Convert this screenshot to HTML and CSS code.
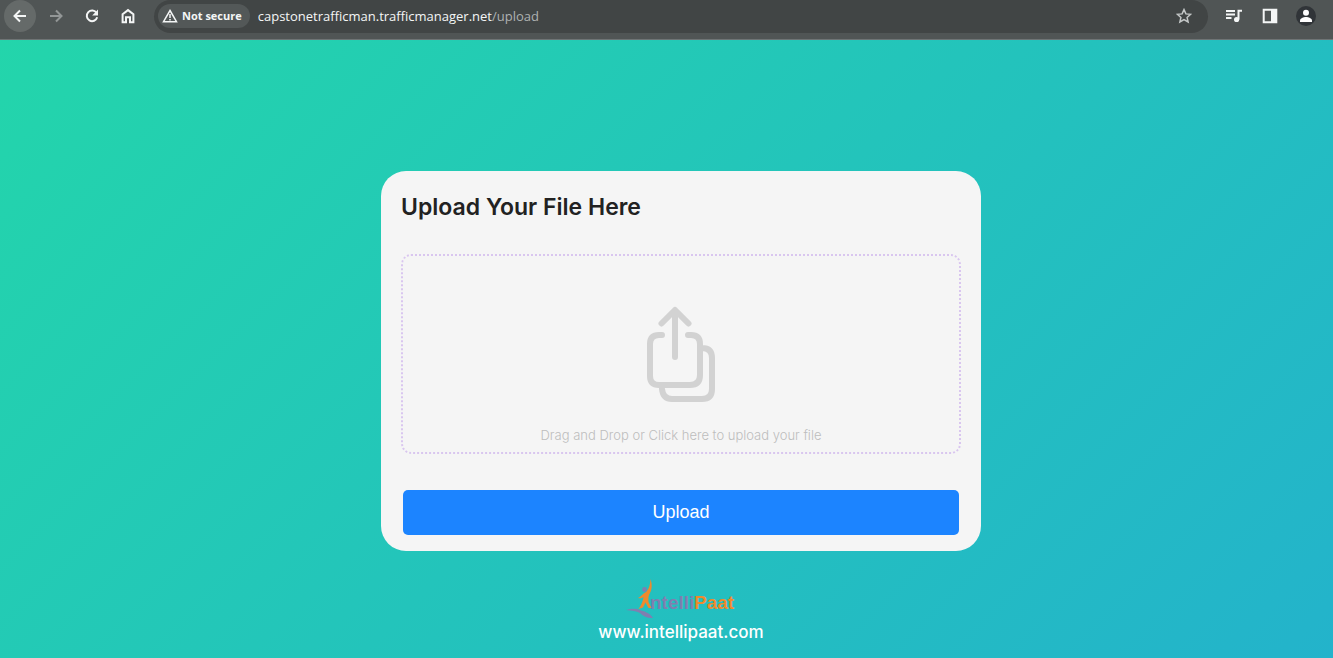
FILE: index.html
```html
<!DOCTYPE html>
<html lang="en">
<head>
<meta charset="utf-8">
<meta name="viewport" content="width=device-width, initial-scale=1">
<title>Upload</title>
<link rel="stylesheet" href="styles.css">
</head>
<body>
<header class="toolbar">
  <nav class="nav-buttons" aria-label="Browser navigation">
    <button class="icon-button icon-button-active" type="button" aria-label="Back">
      <svg class="icon" viewBox="0 0 16 16"><path d="M14 8H3M8 2.5 2.5 8 8 13.5"/></svg>
    </button>
    <button class="icon-button icon-button-dim" type="button" aria-label="Forward">
      <svg class="icon" viewBox="0 0 16 16"><path d="M2 8h11M8 2.5 13.5 8 8 13.5"/></svg>
    </button>
    <button class="icon-button" type="button" aria-label="Reload">
      <svg class="icon" viewBox="0 0 16 16"><path d="M12.6 5A5.3 5.3 0 1 0 13.2 9.3"/><path class="solid" d="M14 1.6v5.8H8.2z"/></svg>
    </button>
    <button class="icon-button" type="button" aria-label="Home">
      <svg class="icon" viewBox="0 0 16 16"><path d="M2.6 6.3 8 2.1l5.4 4.2v8H10V9.2H6v5.1H2.6z"/></svg>
    </button>
  </nav>
  <div class="address-bar">
    <button class="security-chip" type="button">
      <svg class="icon warning-icon" viewBox="0 0 16 16"><path d="M8 2.5 14.5 13.7h-13zM8 6v4M8 11v1.500"/></svg>
      <span>Not secure</span>
    </button>
    <p class="address">capstonetrafficman.trafficmanager.net<span class="address-path">/upload</span></p>
    <button class="icon-button star-button" type="button" aria-label="Bookmark">
      <svg class="icon" viewBox="0 0 16 16"><path d="m8 1.600 1.900 4.300 4.700.4-3.500 3.100 1 4.600L8 11.600 3.900 14l1-4.600-3.500-3.100 4.700-.4z"/></svg>
    </button>
  </div>
  <div class="tools">
    <button class="icon-button" type="button" aria-label="Media controls">
      <svg class="icon" viewBox="0 0 16 16"><path d="M0 3h9M0 6.500h9M0 10h5.500M12.500 11.500V2.700H16"/><circle class="solid" cx="10.600" cy="11.500" r="2.600"/></svg>
    </button>
    <button class="icon-button" type="button" aria-label="Side panel">
      <svg class="icon" viewBox="0 0 16 16"><path d="M1.700 1.700h12.600v12.600H1.700z"/><path class="solid" d="M9 1h6v14H9z"/></svg>
    </button>
    <button class="icon-button" type="button" aria-label="Profile">
      <svg class="avatar" viewBox="0 0 20 20"><circle class="avatar-back" cx="10" cy="10" r="10"/><circle class="avatar-person" cx="10" cy="6.800" r="3"/><path class="avatar-person" d="M4 16v-1.500c0-2.200 3.500-3.500 6-3.500s6 1.300 6 3.500V16z"/></svg>
    </button>
  </div>
</header>
<main class="page">
  <form class="card">
    <h1 class="card-title">Upload Your File Here</h1>
    <label class="drop-area" for="file">
      <input class="file-input" id="file" type="file">
      <svg class="upload-icon" viewBox="0 0 72 96" aria-hidden="true"><path d="M30 51V5M16.500 17.500 30 4l13.500 13.500M17 29h-3Q5 29 5 38v32q0 9 9 9h31q10 0 10-10V38q0-9-9-9h-3M57 42q10 0 10 10v31q0 10-10 10H27q-9 0-10-10"/></svg>
      <span class="drop-text">Drag and Drop or Click here to upload your file</span>
    </label>
    <button class="upload-button" type="submit">Upload</button>
  </form>
  <footer class="brand">
    <svg class="logo" viewBox="0 0 112 42" role="img" aria-label="IntelliPaat">
      <path class="logo-orange" d="M25.500 1C27.500 7 27 12 24 17c-1 3-.5 5-.5 7l3 6h-3l-3-5.500-2.500 5-4.500 1.500c3-4 4.500-8 5-12-2 1.500-3.500 1.500-5.500 1 3-1.500 5-4.500 8-6 3-3 4-7 4.500-13z"/>
      <circle class="logo-purple" cx="19.500" cy="11.500" r="2.400"/>
      <path class="logo-purple" d="M1 32c5-1.500 11-2 15 .5 5 1 10 4 12 7.500-5 .5-9-1-13-5-4-2-8-2.500-14-3z"/>
      <text class="logo-text logo-purple" x="25" y="31">ntelli</text>
      <text class="logo-text logo-orange" x="69" y="31">Paat</text>
    </svg>
    <a class="brand-link" href="#">www.intellipaat.com</a>
  </footer>
</main>
</body>
</html>
```
FILE: styles.css
```css
* { box-sizing: border-box; }
body {
  margin: 0;
  min-height: 100vh;
  display: flex;
  flex-direction: column;
  font-family: Inter, "Liberation Sans", sans-serif;
}
button { border: 0; padding: 0; font: inherit; color: inherit; background: none; cursor: pointer; }
.toolbar {
  display: flex;
  align-items: flex-start;
  height: 40px;
  padding: 0 11px 0 4px;
  background: #505555;
  border-bottom: 1px solid #6f7475;
  color: #f4f6f6;
}
.nav-buttons { display: flex; gap: 4px; margin-right: 10px; }
.icon-button { display: grid; place-items: center; width: 32px; height: 32px; border-radius: 16px; }
.icon-button-active { background: #656a69; }
.icon-button-dim { color: #929696; }
.icon { width: 16px; height: 16px; fill: none; stroke: currentColor; stroke-width: 2; }
.icon .solid { fill: currentColor; stroke: none; }
.address-bar {
  flex: 1;
  display: flex;
  align-items: center;
  height: 33px;
  padding: 0 8px 1px 4px;
  border-radius: 17px;
  background: #414545;
}
.security-chip {
  display: flex;
  align-items: center;
  gap: 4px;
  height: 24px;
  padding: 0 8px 0 4px;
  border-radius: 12px;
  background: #535858;
  font: 700 11px/24px "Open Sans", sans-serif;
}
.warning-icon { stroke-width: 1.5; }
.address { flex: 1; margin: 0 0 0 8px; font: 13px/32px "Open Sans", sans-serif; }
.address-path { color: #aeb2b2; }
.star-button { color: #c4c8c8; }
.star-button .icon { stroke-width: 1.5; }
.tools { display: flex; gap: 4px; margin-left: 10px; }
.avatar { width: 20px; height: 20px; }
.avatar-back { fill: #303438; }
.avatar-person { fill: #fff; }
.page {
  flex: 1;
  display: flex;
  flex-direction: column;
  align-items: center;
  padding: 131px 0 14px 29px;
  background: linear-gradient(135deg, #23d5ab, #23b3cb);
}
.card {
  display: flex;
  flex-direction: column;
  width: 100%;
  max-width: 600px;
  padding: 20px 20px 16px;
  border-radius: 25px;
  background: #f5f5f5;
}
.card-title { margin: 0 0 31px; font-size: 23px; line-height: 32px; font-weight: 600; color: #222; }
.drop-area {
  display: flex;
  flex-direction: column;
  align-items: center;
  min-height: 200px;
  padding: 50px 0 7px;
  border: 2px dotted #d9c6ef;
  border-radius: 10px;
  cursor: pointer;
}
.file-input { position: absolute; opacity: 0; pointer-events: none; }
.upload-icon { width: 72px; height: 96px; fill: none; stroke: #d2d2d2; stroke-width: 6; stroke-linecap: round; stroke-linejoin: round; }
.drop-text { margin-top: auto; font-size: 13px; line-height: 20px; font-weight: 300; color: #bdbdbd; }
.upload-button {
  height: 45px;
  margin: 36px 2px 0;
  border-radius: 5px;
  background: #1c84ff;
  color: #fff;
  font: 18px/45px "Liberation Sans", sans-serif;
}
.brand { display: flex; flex-direction: column; align-items: center; margin-top: 27px; }
.logo { width: 112px; height: 42px; }
.logo-text { font: bold 19px "Liberation Sans", sans-serif; }
.logo-purple { fill: #7f7fb0; }
.logo-orange { fill: #ee8a2c; }
.brand-link { color: #fff; font-size: 17px; line-height: 24px; font-weight: 500; text-decoration: none; }
```
